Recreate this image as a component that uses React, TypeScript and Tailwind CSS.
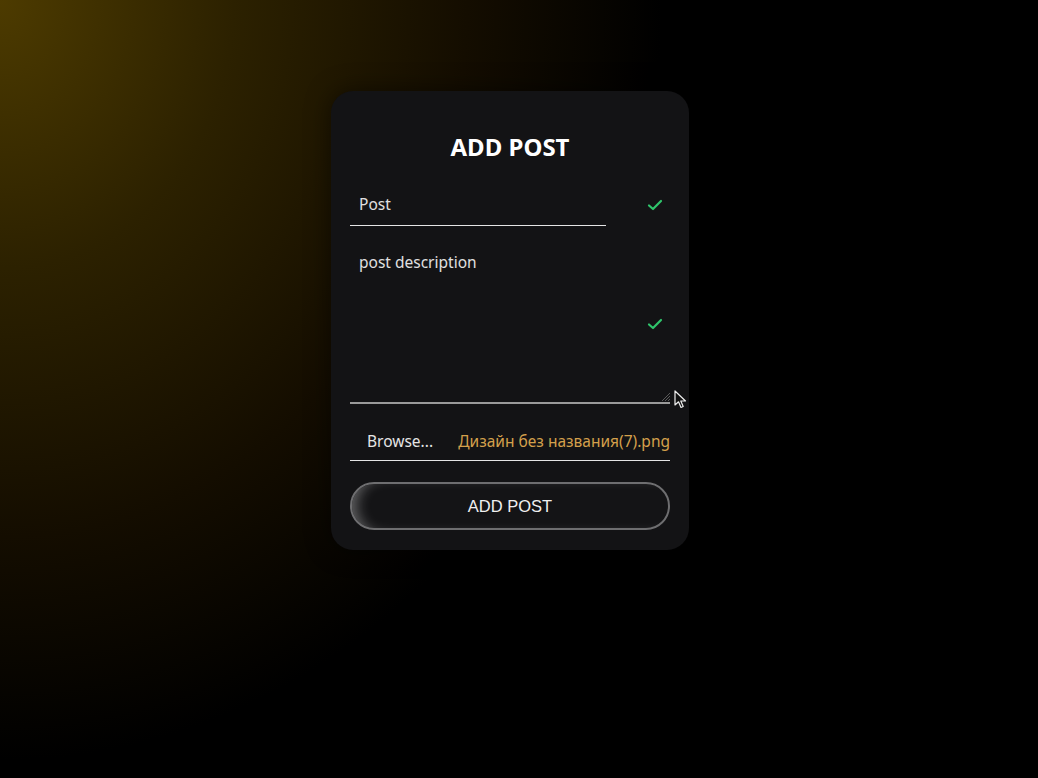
import React from "react";

function Check() {
  return (
    <svg width="16" height="12" viewBox="0 0 16 12" fill="none">
      <path d="M2 6.5 L6 10 L14 2" stroke="#2fc46b" strokeWidth="2.2" strokeLinecap="round" strokeLinejoin="round" />
    </svg>
  );
}

export default function App() {
  return (
    <div
      className="flex min-h-[778px] w-full justify-center pr-[18px] pt-[91px] bg-[radial-gradient(ellipse_75%_115%_at_0%_0%,#4d3b00_0%,#2c2100_30%,#140d00_60%,#000_85%)]"
      style={{ fontFamily: '"Noto Sans", "Open Sans", sans-serif' }}
    >
      <div className="flex h-[459px] w-[358px] flex-col rounded-[22px] bg-[#131315] px-[19px] pt-[40px] pb-[20px] shadow-[0_0_24px_rgba(0,0,0,0.5)]">
        <h1 className="h-[32px] text-center text-[24px] font-bold leading-[32px] text-white">ADD POST</h1>

        {/* title input */}
        <div className="relative mt-[21px] h-[42px]">
          <div className="flex h-[42px] w-[256px] items-center border-b border-[#e5e5e5] pl-[9px] text-[15.5px] text-[#e0e0e0]">
            Post
          </div>
          <div className="absolute right-[7px] top-[15px]">
            <Check />
          </div>
        </div>

        {/* description textarea */}
        <div className="relative mt-[19px] h-[160px] border-b-2 border-[#9a9a9a] pl-[9px] pt-[5px]">
          <p className="text-[15.5px] leading-[24px] text-[#e0e0e0]">post description</p>
          <div className="absolute right-[7px] top-[73px]">
            <Check />
          </div>
          <svg className="absolute right-[0px] bottom-[1px]" width="9" height="9" viewBox="0 0 9 9">
            <path d="M9 1 L1 9 M9 4 L4 9 M9 7 L7 9" stroke="#5a5a5a" strokeWidth="1" />
          </svg>
          <svg className="absolute right-[-18px] bottom-[-8px]" width="14" height="20" viewBox="0 0 14 20">
            <path d="M1 1 L1 15 L4.5 11.8 L7 17.5 L9.2 16.5 L6.8 11 L11.5 11 Z" fill="#111" stroke="#eee" strokeWidth="1.2" strokeLinejoin="round" />
          </svg>
        </div>

        {/* file input */}
        <div className="mt-[20px] flex h-[38px] items-center border-b border-[#e5e5e5] text-[15.5px]">
          <span className="pl-[17px] text-[#e5e5e5]">Browse...</span>
          <span className="ml-auto whitespace-nowrap text-[#d4a04c]">Дизайн без названия(7).png</span>
        </div>

        <button
          className="mt-[21px] h-[48px] w-full rounded-full border-2 border-[#6e6e70] bg-[#141416] text-[16.5px] text-[#f0f0f0] shadow-[inset_12px_0_14px_-8px_rgba(255,255,255,0.35)]"
          style={{ fontFamily: '"Liberation Sans", Arial, sans-serif' }}
        >
          ADD POST
        </button>
      </div>
    </div>
  );
}
